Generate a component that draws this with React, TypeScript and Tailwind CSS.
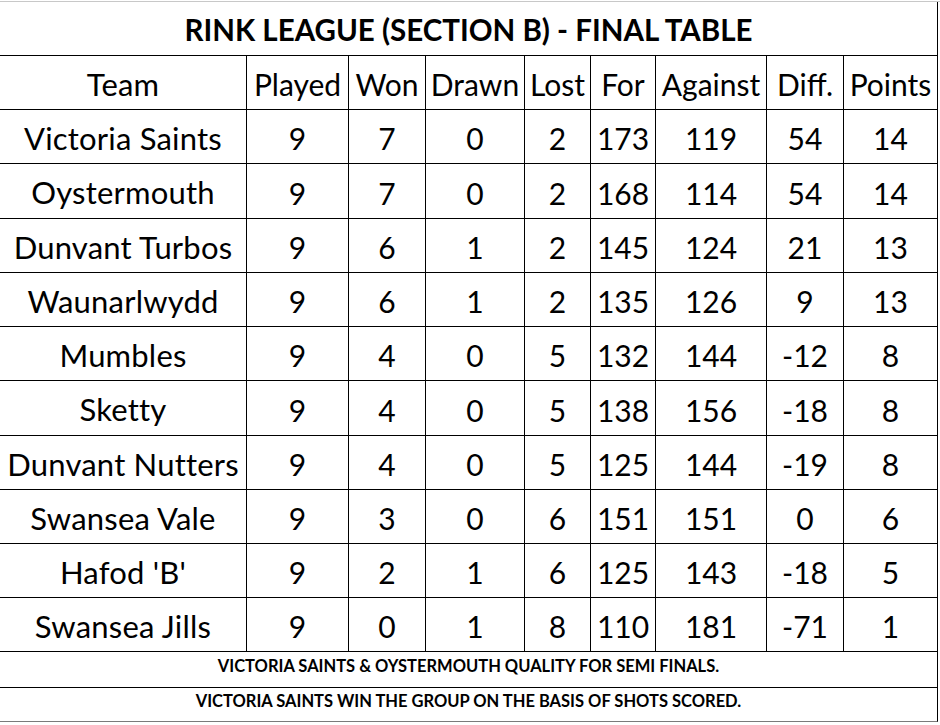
import React from "react";

const cols = [247, 102, 77, 99, 66, 65, 111, 77, 94];
const heights = [54, 54, 55, 54, 54, 54, 55, 54, 54, 54, 54];

const header = ["Team", "Played", "Won", "Drawn", "Lost", "For", "Against", "Diff.", "Points"];
const rows: (string | number)[][] = [
  ["Victoria Saints", 9, 7, 0, 2, 173, 119, 54, 14],
  ["Oystermouth", 9, 7, 0, 2, 168, 114, 54, 14],
  ["Dunvant Turbos", 9, 6, 1, 2, 145, 124, 21, 13],
  ["Waunarlwydd", 9, 6, 1, 2, 135, 126, 9, 13],
  ["Mumbles", 9, 4, 0, 5, 132, 144, -12, 8],
  ["Sketty", 9, 4, 0, 5, 138, 156, -18, 8],
  ["Dunvant Nutters", 9, 4, 0, 5, 125, 144, -19, 8],
  ["Swansea Vale", 9, 3, 0, 6, 151, 151, 0, 6],
  ["Hafod 'B'", 9, 2, 1, 6, 125, 143, -18, 5],
  ["Swansea Jills", 9, 0, 1, 8, 110, 181, -71, 1],
];

function Row({ cells, h }: { cells: (string | number)[]; h: number }) {
  return (
    <div className="flex" style={{ height: h }}>
      {cells.map((c, i) => (
        <div
          key={i}
          className={
            "flex items-center justify-center border-r border-b border-black pt-[3px] whitespace-nowrap " +
            (i === 0 ? "text-[31px] tracking-[0.2px]" : "text-[30px]")
          }
          style={{ width: cols[i] }}
        >
          {c}
        </div>
      ))}
    </div>
  );
}

export default function App() {
  return (
    <div
      className="w-[940px] h-[725px] bg-white text-black overflow-hidden"
      style={{ fontFamily: "Lato, 'Liberation Sans', sans-serif" }}
    >
      <div className="h-px" />
      <div className="h-px bg-[#c8c8c8]" />
      <div className="w-[938px]">
        <div className="h-[54px] border-r border-b border-black flex items-center justify-center pt-[3px] text-[29.5px] font-bold">
          RINK LEAGUE (SECTION B) - FINAL TABLE
        </div>
        <div className="leading-none">
          <Row cells={header} h={heights[0]} />
          {rows.map((r, i) => (
            <Row key={i} cells={r} h={heights[i + 1]} />
          ))}
        </div>
        <div className="h-[36px] border-r border-b border-black flex justify-center pt-[2px] text-[16.5px] font-bold">
          VICTORIA SAINTS &amp; OYSTERMOUTH QUALITY FOR SEMI FINALS.
        </div>
        <div className="h-[34px] border-r border-b border-r-black border-b-[#7a7a7a] flex justify-center pt-[1px] text-[16.5px] font-bold">
          VICTORIA SAINTS WIN THE GROUP ON THE BASIS OF SHOTS SCORED.
        </div>
      </div>
    </div>
  );
}
